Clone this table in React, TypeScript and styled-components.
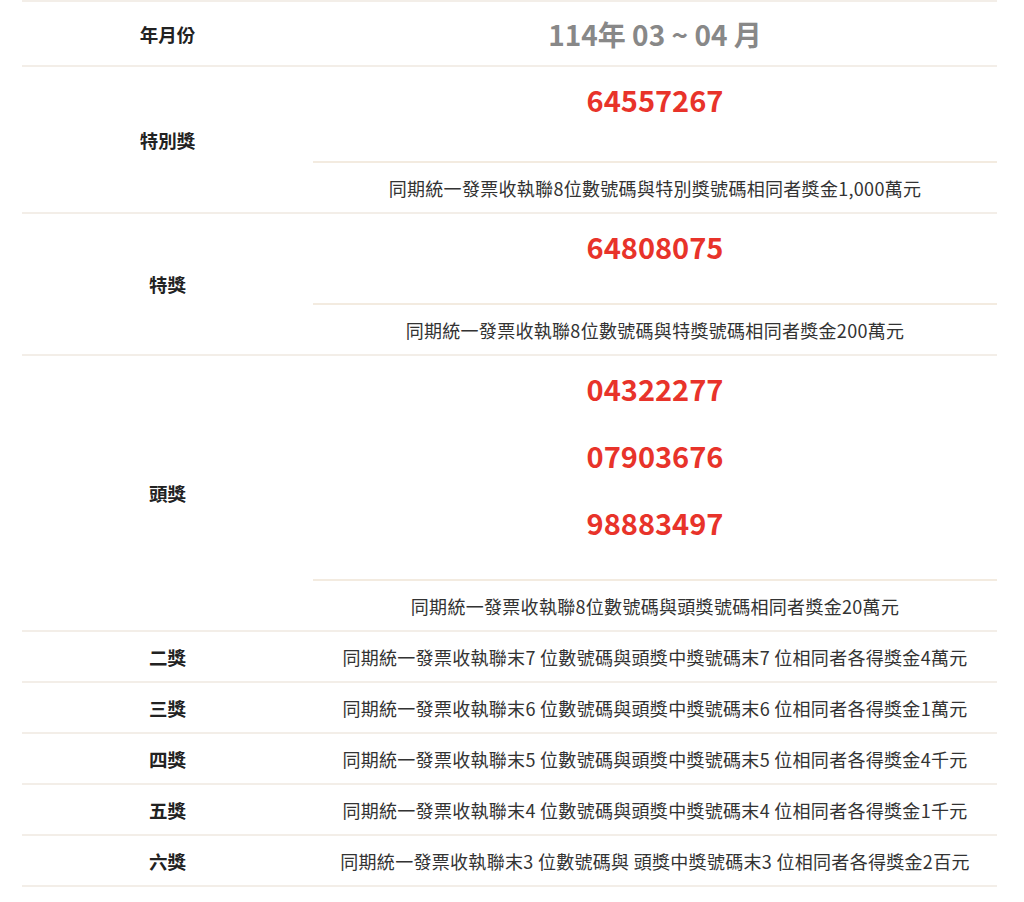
import React from "react";
import styled, { createGlobalStyle } from "styled-components";

const GlobalStyle = createGlobalStyle`
  html, body {
    margin: 0;
    padding: 0;
    background: #ffffff;
  }
  body {
    font-family: "Noto Sans CJK TC", "Noto Sans", sans-serif;
    color: #333333;
  }
`;

interface Prize {
  title: string;
  numbers?: string[];
  extra?: number;
  desc: string;
}

const prizes: Prize[] = [
  {
    title: "特別獎",
    numbers: ["64557267"],
    extra: 5,
    desc: "同期統一發票收執聯8位數號碼與特別獎號碼相同者獎金1,000萬元",
  },
  {
    title: "特獎",
    numbers: ["64808075"],
    desc: "同期統一發票收執聯8位數號碼與特獎號碼相同者獎金200萬元",
  },
  {
    title: "頭獎",
    numbers: ["04322277", "07903676", "98883497"],
    desc: "同期統一發票收執聯8位數號碼與頭獎號碼相同者獎金20萬元",
  },
  { title: "二獎", desc: "同期統一發票收執聯末7 位數號碼與頭獎中獎號碼末7 位相同者各得獎金4萬元" },
  { title: "三獎", desc: "同期統一發票收執聯末6 位數號碼與頭獎中獎號碼末6 位相同者各得獎金1萬元" },
  { title: "四獎", desc: "同期統一發票收執聯末5 位數號碼與頭獎中獎號碼末5 位相同者各得獎金4千元" },
  { title: "五獎", desc: "同期統一發票收執聯末4 位數號碼與頭獎中獎號碼末4 位相同者各得獎金1千元" },
  { title: "六獎", desc: "同期統一發票收執聯末3 位數號碼與 頭獎中獎號碼末3 位相同者各得獎金2百元" },
];

const Table = styled.div`
  margin: 0 27px 0 22px;
  border-top: 2px solid #f3eee8;
`;

const Row = styled.div`
  display: flex;
  border-bottom: 2px solid #f3eee8;
`;

const Label = styled.div`
  width: 291px;
  flex-shrink: 0;
  display: flex;
  align-items: center;
  justify-content: center;
  font-size: 18.5px;
  font-weight: 700;
  color: #222222;
`;

const Values = styled.div`
  flex: 1;
  display: flex;
  flex-direction: column;
`;

const Period = styled.div`
  height: 63px;
  display: flex;
  align-items: center;
  justify-content: center;
  font-size: 28px;
  font-weight: 700;
  color: #888888;
`;

const Numbers = styled.div<{ extra: number }>`
  padding: 12px 0 ${(props) => 10 + props.extra}px;
  border-bottom: 2px solid #f3ebe0;
  text-align: center;
`;

const Number = styled.div`
  font-size: 29px;
  font-weight: 700;
  line-height: 40px;
  margin-bottom: 27px;
  color: #e8332a;
`;

const Desc = styled.div`
  height: 49px;
  display: flex;
  align-items: center;
  justify-content: center;
  font-size: 18px;
  letter-spacing: 0.3px;
  color: #333333;
`;

export default function App() {
  return (
    <>
      <GlobalStyle />
      <Table>
        <Row>
          <Label>年月份</Label>
          <Values>
            <Period>114年 03 ~ 04 月</Period>
          </Values>
        </Row>
        {prizes.map((p) => (
          <Row key={p.title}>
            <Label>{p.title}</Label>
            <Values>
              {p.numbers && (
                <Numbers extra={p.extra ?? 0}>
                  {p.numbers.map((n) => (
                    <Number key={n}>{n}</Number>
                  ))}
                </Numbers>
              )}
              <Desc>{p.desc}</Desc>
            </Values>
          </Row>
        ))}
      </Table>
    </>
  );
}
